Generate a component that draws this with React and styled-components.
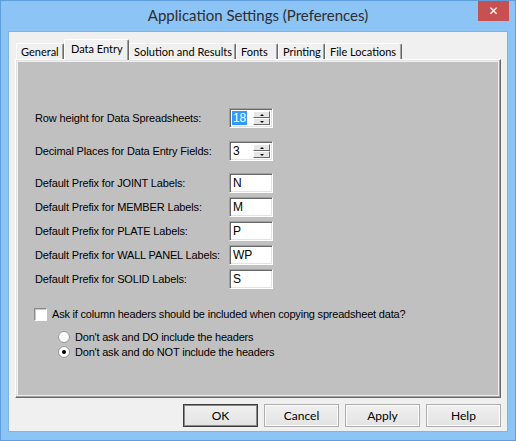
import React from 'react';
import styled, { createGlobalStyle } from 'styled-components';

const GlobalStyle = createGlobalStyle`
  html, body { margin: 0; padding: 0; background: #8cc3f5; }
  body { font-family: "Liberation Sans", Arial, sans-serif; }
  * { box-sizing: border-box; }
`;

const Window = styled.div`
  width: 516px;
  height: 441px;
  background: #8cc4f6;
  border: 1px solid #5f9edb;
  display: flex;
  flex-direction: column;
`;

const TitleBar = styled.div`
  height: 30px;
  display: grid;
  grid-template-columns: 1fr auto 1fr;
  align-items: start;
`;

const Title = styled.div`
  grid-column: 2;
  font-family: Lato, "Noto Sans", sans-serif;
  font-size: 15px;
  color: #2e2e2e;
  line-height: 29px;
  white-space: nowrap;
`;

const CloseButton = styled.div`
  justify-self: end;
  margin-right: 6px;
  width: 31px;
  height: 20px;
  background: #c75050;
  color: #fff;
  font-family: "DejaVu Sans", sans-serif;
  font-weight: bold;
  font-size: 12px;
  display: flex;
  align-items: center;
  justify-content: center;
`;

const Client = styled.div`
  margin: 0 7px 0 7px;
  height: 401px;
  background: #f0f0f0;
  border: 1px solid #7eb4ea;
  display: flex;
  flex-direction: column;
  padding: 6px 0 0 0;
`;

const TabStrip = styled.div`
  display: flex;
  align-items: flex-end;
  height: 21px;
  padding-left: 7px;
  position: relative;
  z-index: 1;
`;

const Tab = styled.div`
  width: ${p => p.$w}px;
  height: ${p => (p.$active ? 21 : 16)}px;
  margin-bottom: ${p => (p.$active ? -1 : 0)}px;
  background: #f0f0f0;
  border-top: 1px solid #fff;
  border-left: 1px solid #fff;
  border-right: 1px solid #696969;
  box-shadow: inset -1px 0 0 #a0a0a0;
  border-radius: 2px 2px 0 0;
  font-family: Lato, "Noto Sans", sans-serif;
  font-size: 11px;
  color: #000;
  display: flex;
  align-items: ${p => (p.$active ? 'flex-start' : 'center')};
  padding-top: ${p => (p.$active ? 2 : 0)}px;
  padding-left: ${p => (p.$active ? 6 : 4)}px;
  white-space: nowrap;
  overflow: hidden;
`;

const Panel = styled.div`
  margin: 0 6px;
  height: 339px;
  border: 1px solid;
  border-color: #fff #696969 #696969 #fff;
  box-shadow: inset -1px -1px 0 #a0a0a0, inset 1px 1px 0 #e3e3e3;
  background: #f0f0f0;
  padding: 2px;
  display: flex;
`;

const PanelBody = styled.div`
  flex: 1;
  background: #c0c0c0;
  padding: 46px 0 0 17px;
  display: flex;
  flex-direction: column;
  font-size: 11px;
  color: #000;
`;

const FieldRow = styled.div`
  display: grid;
  grid-template-columns: 194px 44px;
  align-items: center;
  height: ${p => (p.$spin ? 19 : 20)}px;
  margin-top: ${p => p.$gap || 0}px;
  letter-spacing: -0.15px;
  white-space: nowrap;
`;

const Sunken = styled.div`
  height: 100%;
  background: #fff;
  border: 1px solid;
  border-color: #a0a0a0 #fff #fff #a0a0a0;
  box-shadow: inset 1px 1px 0 #696969, inset -1px -1px 0 #e3e3e3;
  display: flex;
  align-items: center;
  padding: 2px 2px 2px 3px;
  font-size: 12px;
`;

const Selected = styled.span`
  background: #3399ff;
  color: #fff;
  align-self: stretch;
  display: flex;
  align-items: center;
  padding: 0 1px;
  margin-left: -1px;
`;

const SpinValue = styled.div`
  flex: 1;
  display: flex;
  align-self: stretch;
  align-items: center;
`;

const SpinButtons = styled.div`
  width: 17px;
  align-self: stretch;
  display: flex;
  flex-direction: column;
`;

const SpinButton = styled.div`
  flex: 1;
  background: #e6e6e6;
  border: 1px solid;
  border-color: #fff #696969 #696969 #fff;
  display: flex;
  align-items: center;
  justify-content: center;
  &::after {
    content: '';
    border-left: 2px solid transparent;
    border-right: 2px solid transparent;
    ${p => (p.$up ? 'border-bottom: 2px solid #000;' : 'border-top: 2px solid #000;')}
  }
`;

const CheckRow = styled.label`
  display: flex;
  align-items: center;
  gap: 5px;
  margin-top: ${p => p.$gap || 0}px;
  margin-left: ${p => p.$indent || 0}px;
  height: ${p => p.$h || 14}px;
  letter-spacing: -0.2px;
  white-space: nowrap;
`;

const CheckBox = styled.span`
  width: 13px;
  height: 13px;
  background: #fff;
  border: 1px solid;
  border-color: #8a8a8a #fff #fff #8a8a8a;
  box-shadow: inset 1px 1px 0 #c8c8c8;
  margin-left: -1px;
`;

const Radio = styled.span`
  width: 12px;
  height: 12px;
  border-radius: 50%;
  background: radial-gradient(circle at 40% 40%, #fff 55%, #e6e6e6 100%);
  border: 1px solid #9a9a9a;
  display: flex;
  align-items: center;
  justify-content: center;
  &::after {
    content: '';
    width: 4px;
    height: 4px;
    border-radius: 50%;
    background: ${p => (p.$checked ? '#000' : 'transparent')};
  }
`;

const ButtonRow = styled.div`
  display: flex;
  justify-content: flex-end;
  gap: 6px;
  padding: 6px 6px 0 0;
`;

const Button = styled.div`
  width: 75px;
  height: 23px;
  background: linear-gradient(#f0f0f0, #e3e3e3);
  border: 1px solid ${p => (p.$default ? '#3c3c3c' : '#adadad')};
  box-shadow: ${p => (p.$default ? 'inset 0 0 0 1px #8a8a8a' : 'inset 0 0 0 1px #fcfcfc')};
  font-family: Lato, "Noto Sans", sans-serif;
  font-size: 12px;
  color: #000;
  display: flex;
  align-items: center;
  justify-content: center;
`;

const tabs = [
  ['General', 48],
  ['Data Entry', 65, true],
  ['Solution and Results', 107],
  ['Fonts', 42],
  ['Printing', 47],
  ['File Locations', 77],
];

const prefixes = [
  ['Default Prefix for JOINT Labels:', 'N', 13],
  ['Default Prefix for MEMBER Labels:', 'M', 4],
  ['Default Prefix for PLATE Labels:', 'P', 4],
  ['Default Prefix for WALL PANEL Labels:', 'WP', 4],
  ['Default Prefix for SOLID Labels:', 'S', 4],
];

function Spin({ value, selected }) {
  return (
    <Sunken>
      <SpinValue>{selected ? <Selected>{value}</Selected> : value}</SpinValue>
      <SpinButtons>
        <SpinButton $up />
        <SpinButton />
      </SpinButtons>
    </Sunken>
  );
}

export default function App() {
  return (
    <>
      <GlobalStyle />
      <Window>
        <TitleBar>
          <Title>Application Settings (Preferences)</Title>
          <CloseButton>✕</CloseButton>
        </TitleBar>
        <Client>
          <TabStrip>
            {tabs.map(([name, w, active]) => (
              <Tab key={name} $w={w} $active={active}>{name}</Tab>
            ))}
          </TabStrip>
          <Panel>
            <PanelBody>
              <FieldRow $spin>
                <span>Row height for Data Spreadsheets:</span>
                <Spin value="18" selected />
              </FieldRow>
              <FieldRow $spin $gap={14}>
                <span>Decimal Places for Data Entry Fields:</span>
                <Spin value="3" />
              </FieldRow>
              {prefixes.map(([label, value, gap]) => (
                <FieldRow key={label} $gap={gap}>
                  <span>{label}</span>
                  <Sunken>{value}</Sunken>
                </FieldRow>
              ))}
              <CheckRow $gap={18}>
                <CheckBox />
                Ask if column headers should be included when copying spreadsheet data?
              </CheckRow>
              <CheckRow $gap={9} $indent={23} $h={14}>
                <Radio />
                Don't ask and DO include the headers
              </CheckRow>
              <CheckRow $gap={1} $indent={23} $h={14}>
                <Radio $checked />
                Don't ask and do NOT include the headers
              </CheckRow>
            </PanelBody>
          </Panel>
          <ButtonRow>
            <Button $default>OK</Button>
            <Button>Cancel</Button>
            <Button>Apply</Button>
            <Button>Help</Button>
          </ButtonRow>
        </Client>
      </Window>
    </>
  );
}
